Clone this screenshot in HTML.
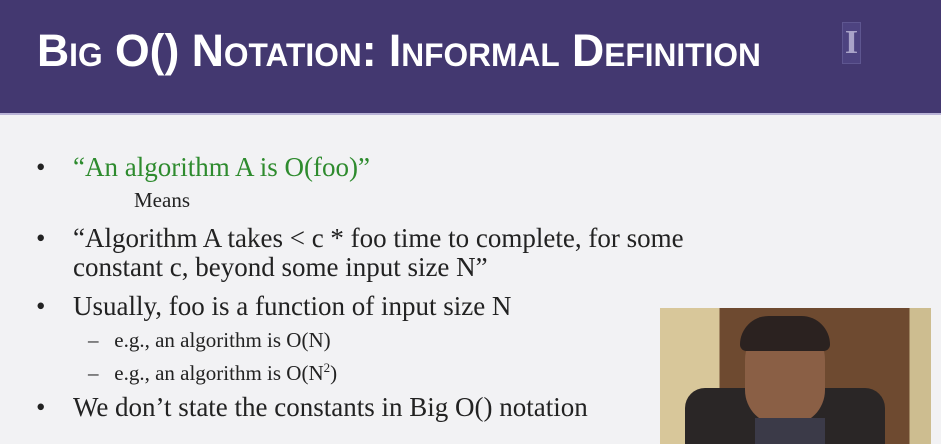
<!DOCTYPE html><html><head><style>
body{margin:0;width:941px;height:444px;background:#f2f2f4;position:relative;overflow:hidden;font-family:"Liberation Serif",serif;}
.hd{position:absolute;left:0;top:0;width:941px;height:113px;background:#433870;border-bottom:2px solid #b9b3d6}
.t{position:absolute;left:37px;top:25px;color:#fff;font:bold 45px "Liberation Sans",sans-serif;font-variant:small-caps;transform:scaleX(0.99);transform-origin:left;white-space:nowrap}
.logo{position:absolute;left:842px;top:22px;width:17px;height:40px;background:#4d4380;border:1px solid #5e5690;color:#a9a3c8;font:bold 34px "Liberation Serif",serif;text-align:center;line-height:40px}
.l{position:absolute;font-size:27px;color:#222;white-space:nowrap}
.s{font-size:21px}
.g{color:#2e8b2e}
.b{left:36px}
.cam{position:absolute;left:660px;top:308px;width:271px;height:136px;background:linear-gradient(90deg,#d8c79a 0 22%,#6e4a30 22% 92%,#cdbd90 92%)}
</style></head><body>
<div class="hd"><div class="t">Big O() Notation: Informal Definition</div><div class="logo">I</div></div>
<div class="l b" style="top:152px">•</div><div class="l" style="left:73px;top:152px"><span class="g">“An algorithm A is O(foo)”</span></div>
<div class="l s" style="left:134px;top:188px">Means</div>
<div class="l b" style="top:223px">•</div><div class="l" style="left:73px;top:223px">“Algorithm A takes &lt; c * foo time to complete, for some</div>
<div class="l" style="left:73px;top:252px">constant c, beyond some input size N”</div>
<div class="l b" style="top:291px">•</div><div class="l" style="left:73px;top:291px">Usually, foo is a function of input size N</div>
<div class="l s" style="left:88px;top:328px">–&nbsp;&nbsp;&nbsp;e.g., an algorithm is O(N)</div>
<div class="l s" style="left:88px;top:360px">–&nbsp;&nbsp;&nbsp;e.g., an algorithm is O(N<sup style="font-size:13px">2</sup>)</div>
<div class="l b" style="top:392px">•</div><div class="l" style="left:73px;top:392px">We don’t state the constants in Big O() notation</div>
<div class="cam">
<div style="position:absolute;left:25px;top:80px;width:200px;height:56px;background:#2a2626;border-radius:20px 20px 0 0"></div>
<div style="position:absolute;left:85px;top:12px;width:80px;height:105px;background:#8a5f45;border-radius:40px 40px 35px 35px"></div>
<div style="position:absolute;left:80px;top:8px;width:90px;height:35px;background:#2b2220;border-radius:45px 45px 10px 10px"></div>
<div style="position:absolute;left:95px;top:110px;width:70px;height:26px;background:#3b3a48"></div>
</div>
</body></html>
